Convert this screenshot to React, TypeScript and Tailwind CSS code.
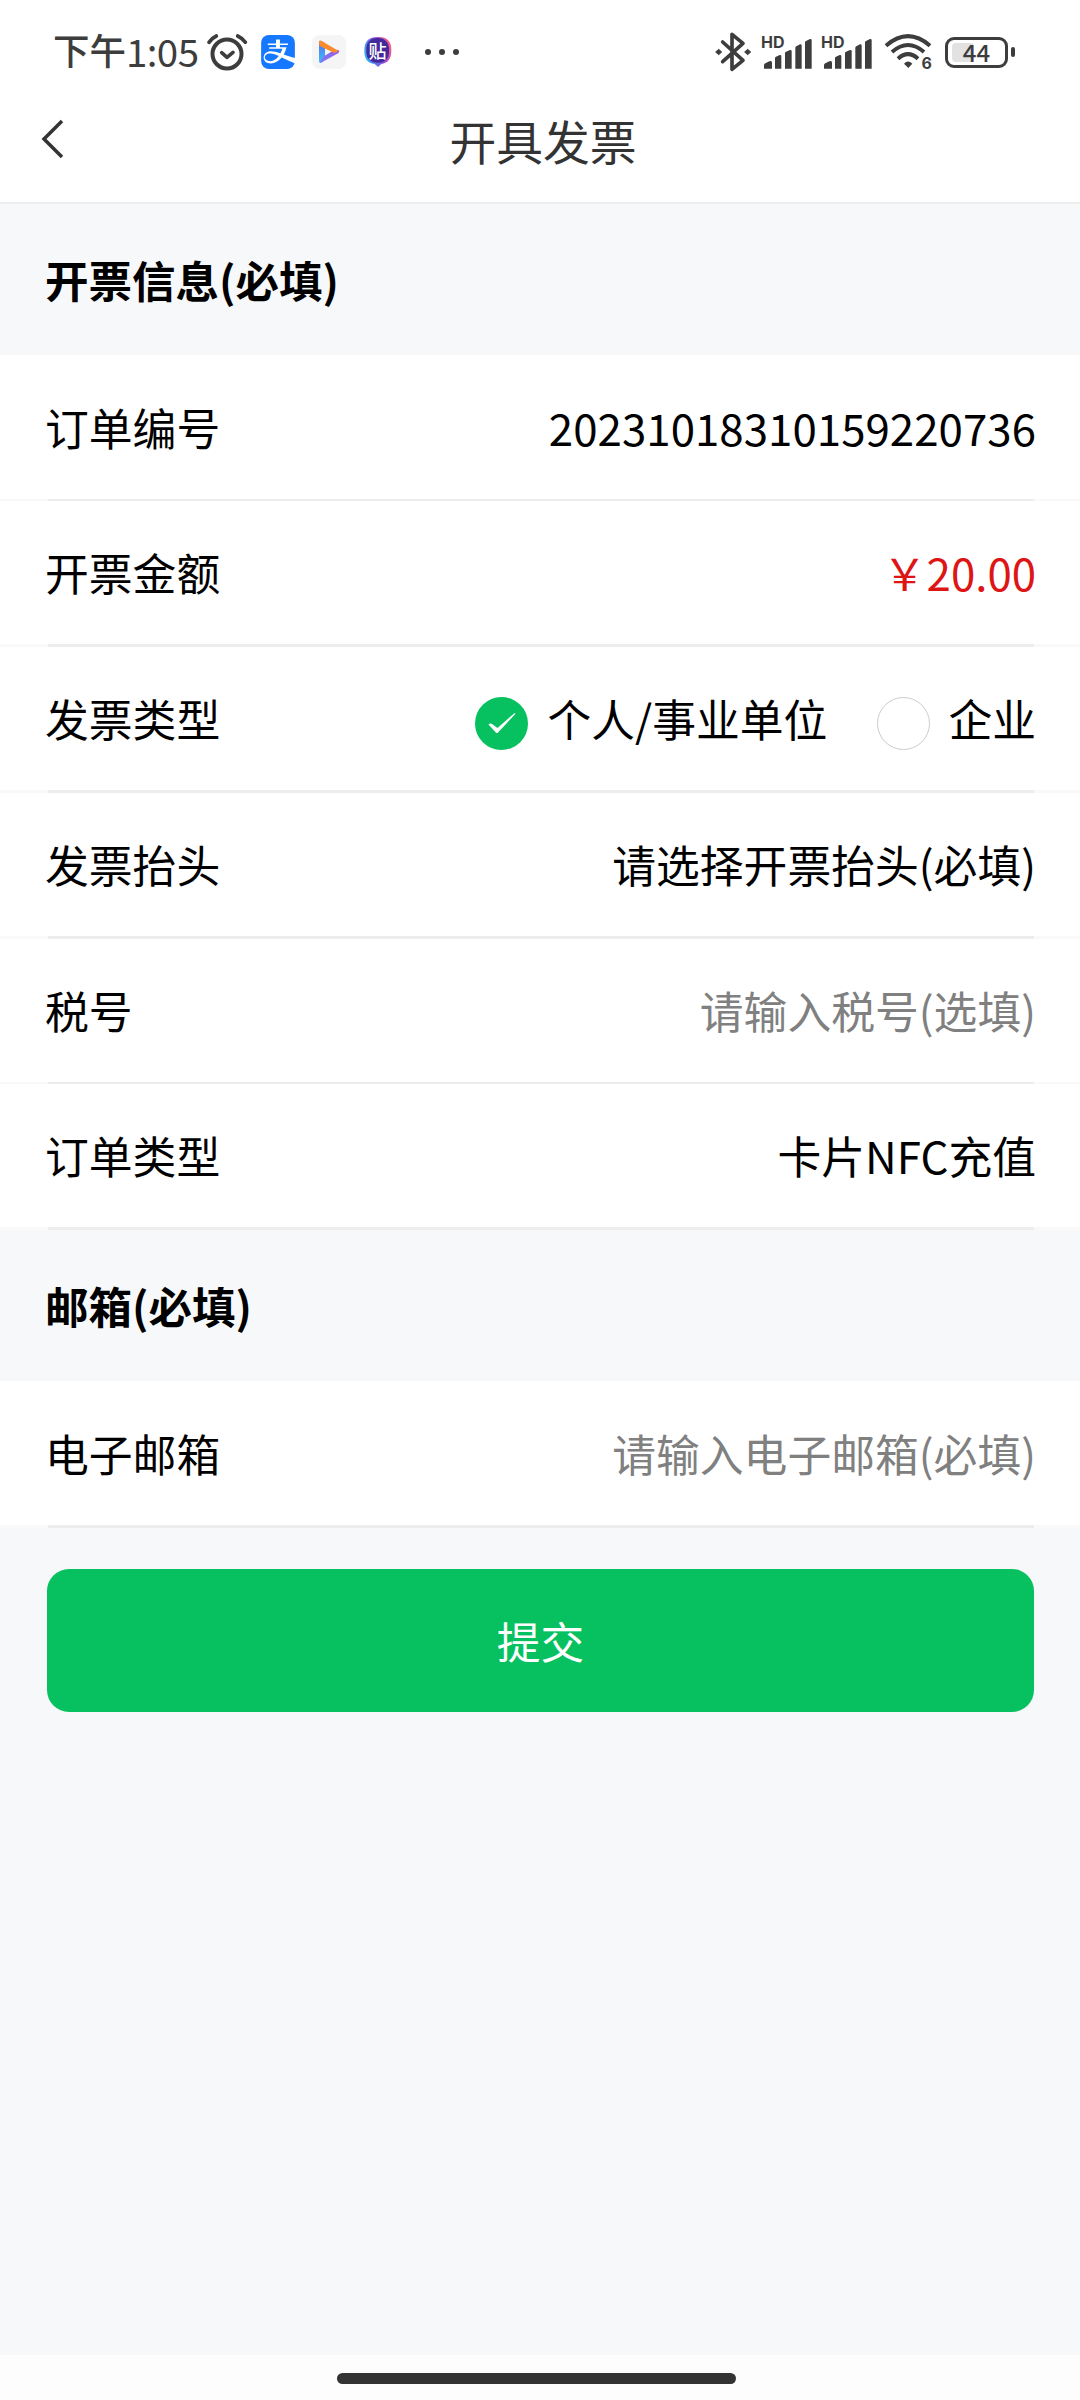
import type { ReactNode } from "react";
import { SiAlipay } from "react-icons/si";

const ink = "#3d3d3d";

function SignalBars() {
  return (
    <div className="relative h-[34px] w-[50px] shrink-0">
      <span className="absolute top-[-3px] left-[-1px] font-['Inter','Liberation_Sans',sans-serif] text-[16px] leading-[20px] font-bold text-[#3d3d3d]">
        HD
      </span>
      <svg className="block h-[34px] w-[50px]" viewBox="186 42 150 102" fill={ink}>
        <path d="M192 143v-10q0-4 4-6l12-6q8-3 8 4v18z" />
        <path d="M225 143v-32q0-3 3-4l11-5q5-1 5 4v37z" />
        <path d="M255 143v-47q0-3 3-4l12-5q5-1 5 4v52z" />
        <path d="M286 143v-63q0-3 3-4l11-6q5-1 5 4v69z" />
        <path d="M315 143v-79q0-3 3-4l12-6q5-1 5 4v85z" />
      </svg>
    </div>
  );
}

function StatusBar() {
  return (
    <div className="flex h-[104px] items-center pl-[53px] text-[#3d3d3d]">
      <span className="mb-[4px] w-[73px] shrink-0 text-[36.5px] leading-[60px] font-medium whitespace-nowrap">下午</span>
      <span className="mb-[4px] w-[80px] shrink-0 text-[38.5px] leading-[60px] tracking-[-0.6px] whitespace-nowrap">1:05</span>

      {/* Alarm clock */}
      <svg className="h-[38px] w-[42px] shrink-0" viewBox="0 0 126 114" fill="none" stroke={ink} strokeLinecap="round">
        <circle cx="63" cy="63" r="43.500" strokeWidth="12" />
        <path d="M47 59l16 14 18-15" strokeWidth="11" strokeLinejoin="round" />
        <path d="M9 28Q18 15 31 9M95 9Q110 16 118 28" strokeWidth="11" />
      </svg>

      <div className="ml-[13px] h-[34px] w-[34px] shrink-0 overflow-hidden rounded-[8px] bg-white">
        <SiAlipay className="h-[34px] w-[34px] text-[#1677ff]" />
      </div>

      {/* Video player */}
      <div className="ml-[17px] flex h-[34px] w-[34px] shrink-0 items-center justify-center rounded-[8px] bg-[#f5f5f6]">
        <svg className="h-[24px] w-[22px]" viewBox="0 0 66 72">
          <defs>
            <linearGradient id="playBlue" x1="0" y1="0" x2="0" y2="1">
              <stop offset="0" stopColor="#5b6cf0" />
              <stop offset="1" stopColor="#35c3f3" />
            </linearGradient>
            <linearGradient id="playPurple" x1="0" y1="1" x2="1" y2="0">
              <stop offset="0" stopColor="#7b7cf2" />
              <stop offset="1" stopColor="#9b5be8" />
            </linearGradient>
          </defs>
          <path d="M3 6q0-6 6-3l12 6v48l-9 10q-9 6-9-5z" fill="url(#playBlue)" />
          <path d="M12 67q-5 2-7-2l15-18 25-15 15-3q7 6 0 11z" fill="url(#playPurple)" />
          <path d="M3 7q0-8 8-4l46 27q5 4 0 7-8 3-14-1L5 18z" fill="#fb8c2e" />
        </svg>
      </div>

      {/* Forum app */}
      <div className="relative ml-[17px] h-[34px] w-[30px] shrink-0">
        <svg className="h-[34px] w-[30px]" viewBox="0 0 90 102">
          <defs>
            <linearGradient id="forumRing" x1="0" y1="0.700" x2="1" y2="0.300">
              <stop offset="0" stopColor="#29b6f6" />
              <stop offset="0.550" stopColor="#8a4be0" />
              <stop offset="1" stopColor="#ff5a86" />
            </linearGradient>
          </defs>
          <path d="M45 6c28 0 40 12 40 40 0 26-10 38-30 41l-10 9-10-9C13 84 4 72 4 48 4 18 17 6 45 6z" fill="url(#forumRing)" />
          <rect x="10" y="9" width="68" height="74" rx="30" fill="#432a9b" />
        </svg>
        <span className="absolute top-[5px] left-0 w-[29px] text-center text-[18px] leading-[20px] font-medium text-white">贴</span>
      </div>

      <div className="ml-[32px] flex w-[34px] shrink-0 gap-[8px]">
        <i className="h-[6px] w-[6px] rounded-full bg-[#3d3d3d]" />
        <i className="h-[6px] w-[6px] rounded-full bg-[#3d3d3d]" />
        <i className="h-[6px] w-[6px] rounded-full bg-[#3d3d3d]" />
      </div>

      {/* Bluetooth */}
      <svg className="ml-[255px] h-[40px] w-[38px] shrink-0" viewBox="42 36 114 120" fill="none" stroke={ink} strokeWidth="11">
        <path d="M68 66l61 55-33 27V43l33 27-61 55" strokeLinecap="round" strokeLinejoin="round" />
        <path d="M56 88l9 8-9 8-9-8zM143 88l9 8-9 8-9-8z" fill={ink} strokeWidth="3" strokeLinejoin="round" />
      </svg>

      <div className="ml-[10px] flex shrink-0 gap-[10px]">
        <SignalBars />
        <SignalBars />
      </div>

      {/* Wi-Fi 6 */}
      <div className="relative ml-[12px] h-[36px] w-[48px] shrink-0">
        <svg className="h-[36px] w-[48px]" viewBox="72 45 144 108" fill="none" stroke={ink} strokeWidth="12">
          <path d="M78 80Q144 23 210 80" />
          <path d="M96 99Q144 57 192 99" />
          <path d="M114 119Q144 92 174 119" />
          <path d="M132 134q12-13 25 0l-12 13z" fill={ink} stroke="none" />
        </svg>
        <span className="absolute right-0 bottom-[-1px] font-['Inter','Liberation_Sans',sans-serif] text-[16px] leading-[16px] font-bold">6</span>
      </div>

      {/* Battery */}
      <div className="ml-[13px] flex shrink-0 items-center gap-[3px]">
        <div className="relative flex h-[31px] w-[63px] items-center justify-center rounded-[9px] border-[3px] border-[#3d3d3d]">
          <div className="absolute top-[3px] left-[4px] h-[19px] w-[21px] rounded-l-[4px] bg-[#e2e2e2]" />
          <span className="relative mb-px text-[24px] leading-[24px] font-medium">44</span>
        </div>
        <i className="h-[10px] w-[4px] rounded-[2px] bg-[#3d3d3d]" />
      </div>
    </div>
  );
}

function SectionTitle({ children }: { children: ReactNode }) {
  return (
    <h2 className="flex h-[151px] items-center bg-[#f7f8fa] px-[45px] pt-px text-[43.5px] leading-[60px] font-bold text-black">
      {children}
    </h2>
  );
}

function Row({ label, height, line, children }: { label: string; height: string; line: string; children: ReactNode }) {
  return (
    <>
      <div className={`${height} flex items-center justify-between bg-white pr-[44px] pl-[45px] text-[43.8px] text-black`}>
        <span className="leading-[60px] whitespace-nowrap">{label}</span>
        <div className="flex items-center leading-[60px] whitespace-nowrap">{children}</div>
      </div>
      <div className={`${line} bg-[#f9f9f9] pr-[46px] pl-[48px]`}>
        <div className="h-full bg-[#ededed]" />
      </div>
    </>
  );
}

export default function App() {
  return (
    <div className="flex h-[2400px] w-[1080px] flex-col overflow-hidden bg-[#f7f8fa] font-['Noto_Sans_CJK_SC',sans-serif]">
      <header className="h-[204px] shrink-0 border-b-2 border-[#eeeeee] bg-white">
        <StatusBar />
        <div className="grid h-[76px] grid-cols-[100px_1fr_100px] items-center text-[#333333]">
          <svg className="mb-[7px] ml-[40px] h-[42px] w-[26px]" viewBox="0 0 26 42" fill="none" stroke="#333333" strokeWidth="3.500">
            <path d="M22 3L4 21l18 18" />
          </svg>
          <h1 className="mb-[5px] pl-[6px] text-center text-[46.8px] leading-[71px]">开具发票</h1>
        </div>
      </header>

      <main className="flex flex-1 flex-col">
        <SectionTitle>开票信息(必填)</SectionTitle>
        <Row label="订单编号" height="h-[144px] pb-px" line="h-[2px]">
          <span className="tracking-[0.050px]">20231018310159220736</span>
        </Row>
        <Row label="开票金额" height="h-[143px] pb-[2px]" line="h-[3px]">
          <span className="text-[#dd1515]">￥20.00</span>
        </Row>
        <Row label="发票类型" height="h-[143px] pb-px" line="h-[3px]">
          <span className="mt-[10px] mr-[19px] flex h-[53px] w-[53px] items-center justify-center rounded-full bg-[#07c160]">
            <svg className="h-[22px] w-[30px]" viewBox="0 0 30 22" fill="white">
              <path d="M1.500 12.500q1.500-1.800 3.500-.5l5.500 4L27 1.500q1-.6 1.500.3L11 20.500q-1.200 1-2.200 0z" />
            </svg>
          </span>
          <span>个人/事业单位</span>
          <span className="mt-[10px] mr-[18px] ml-[50px] h-[53px] w-[53px] rounded-full border-[1.5px] border-[#cccccc]" />
          <span>企业</span>
        </Row>
        <Row label="发票抬头" height="h-[143px] pb-[2px]" line="h-[3px]">请选择开票抬头(必填)</Row>
        <Row label="税号" height="h-[143px] pb-[2px]" line="h-[2px]">
          <span className="text-[#808080]">请输入税号(选填)</span>
        </Row>
        <Row label="订单类型" height="h-[143px] pb-[2px]" line="h-[3px]">卡片NFC充值</Row>
        <SectionTitle>邮箱(必填)</SectionTitle>
        <Row label="电子邮箱" height="h-[144px]" line="h-[3px]">
          <span className="text-[#808080]">请输入电子邮箱(必填)</span>
        </Row>
        <button className="mt-[41px] mr-[46px] ml-[47px] h-[143px] rounded-[22px] bg-[#07c160] pb-px text-[43.7px] leading-[60px] text-white">
          提交
        </button>
      </main>

      <footer className="flex h-[45px] shrink-0 justify-center bg-[#fdfdfe] pt-[18px]">
        <div className="ml-[-7px] h-[11px] w-[399px] rounded-full bg-[#333333]" />
      </footer>
    </div>
  );
}
